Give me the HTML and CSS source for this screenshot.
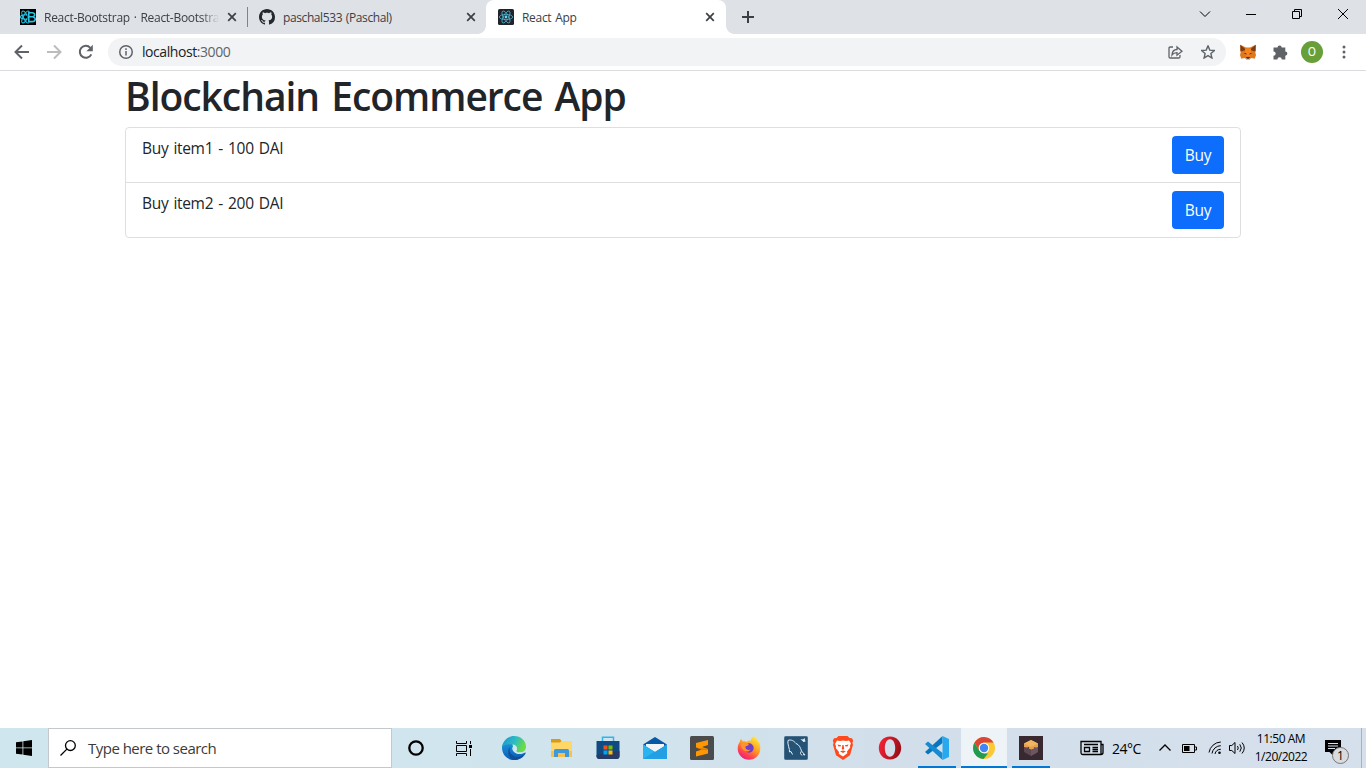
FILE: index.html
```html
<!DOCTYPE html>
<html lang="en">
<head>
<meta charset="utf-8">
<title>React App</title>
<link rel="stylesheet" href="styles.css">
</head>
<body>
<div class="screen">
  <header class="tabstrip">
    <div class="tab tab-first">
      <svg class="favicon" viewBox="0 0 16 16"><path fill="#000" d="M0 0h16v16H0z"/><g fill="none" stroke="#29c4e4" stroke-width="1.1"><ellipse cx="5.5" cy="8" rx="5" ry="2.2"/><ellipse cx="5.5" cy="8" rx="6.6" ry="2.2" transform="rotate(62 5.5 8)"/><ellipse cx="5.5" cy="8" rx="6.6" ry="2.2" transform="rotate(118 5.5 8)"/></g><path fill="#000" d="M7.5 3H16v10.500H7.500z"/><path fill="none" stroke="#29c4e4" stroke-width="1.6" d="M8.800 3.800h3.300c3.500 0 3.300 4 0 4 4.300 0 4 4.800 0 4.800H8.800zM8.800 7.800h3.500"/></svg>
      <span class="tab-title fade">React-Bootstrap · React-Bootstrap</span>
      <svg class="tab-close" viewBox="0 0 10 10"><path d="M1.200 1.200l7.600 7.600M8.800 1.200L1.200 8.800"/></svg>
    </div>
    <div class="tab tab-second">
      <svg class="favicon" viewBox="0 0 16 16"><path fill="#24292f" d="M8 0C3.580 0 0 3.580 0 8c0 3.540 2.290 6.530 5.470 7.590.4.070.55-.17.55-.38 0-.19-.01-.82-.01-1.490-2.010.37-2.530-.49-2.690-.94-.09-.23-.48-.94-.82-1.130-.28-.15-.68-.52-.01-.53.63-.01 1.080.58 1.230.82.72 1.210 1.870.87 2.330.66.07-.52.28-.87.51-1.070-1.780-.2-3.640-.89-3.640-3.950 0-.87.31-1.590.82-2.150-.08-.2-.36-1.020.08-2.120 0 0 .67-.21 2.200.82.64-.18 1.320-.27 2-.27s1.360.09 2 .27c1.530-1.040 2.200-.82 2.200-.82.44 1.100.16 1.920.08 2.120.51.56.82 1.270.82 2.150 0 3.070-1.870 3.750-3.650 3.950.29.25.54.73.54 1.480 0 1.070-.01 1.930-.01 2.200 0 .21.15.46.55.38A8 8 0 0 0 16 8c0-4.420-3.580-8-8-8z"/></svg>
      <span class="tab-title">paschal533 (Paschal)</span>
      <svg class="tab-close" viewBox="0 0 10 10"><path d="M1.200 1.200l7.600 7.600M8.800 1.200L1.200 8.800"/></svg>
    </div>
    <div class="tab tab-active">
      <svg class="favicon" viewBox="0 0 16 16"><rect width="16" height="16" rx="1.500" fill="#20232a"/><g fill="none" stroke="#4fb3cd" stroke-width=".8"><ellipse cx="8" cy="8" rx="6.700" ry="2.600"/><ellipse cx="8" cy="8" rx="6.700" ry="2.600" transform="rotate(60 8 8)"/><ellipse cx="8" cy="8" rx="6.700" ry="2.600" transform="rotate(120 8 8)"/></g><circle cx="8" cy="8" r="1.400" fill="#61dafb"/></svg>
      <span class="tab-title tt-app">React App</span>
      <svg class="tab-close" viewBox="0 0 10 10"><path d="M1.200 1.200l7.600 7.600M8.800 1.200L1.200 8.800"/></svg>
    </div>
    <svg class="new-tab" viewBox="0 0 12 12"><path d="M6 0v12M0 6h12"/></svg>
    <div class="window-controls">
      <svg viewBox="0 0 12 12"><path d="M1 3.500l5 5 5-5"/></svg>
      <svg viewBox="0 0 12 12"><path d="M1 6.500h10"/></svg>
      <svg viewBox="0 0 12 12"><path d="M1.500 3.500h7v7h-7zM3.500 3.500v-2h7v7h-2"/></svg>
      <svg viewBox="0 0 12 12"><path d="M1 1l10 10M11 1L1 11"/></svg>
    </div>
  </header>

  <nav class="toolbar">
    <svg class="nav-icon" viewBox="0 0 16 16"><path d="M15 8H2M8 1.500L1.500 8 8 14.500"/></svg>
    <svg class="nav-icon disabled" viewBox="0 0 16 16"><path d="M1 8h13M8 1.500L14.500 8 8 14.500"/></svg>
    <svg class="nav-icon" viewBox="0 0 16 16"><path d="M13.300 10.300A6 6 0 1 1 12.300 3.800"/><path class="solid" d="M14.800.8v6.400H8.400z"/></svg>
    <div class="omnibox">
      <svg class="info" viewBox="0 0 14 14"><circle cx="7" cy="7" r="6.250"/><path d="M7 6v4.500M7 3.300v1.600"/></svg>
      <span class="address">localhost<span class="port">:3000</span></span>
      <svg class="share" viewBox="0 0 15 14"><path d="M5 2H2.300Q1 2 1 3.300v8.400Q1 13 2.300 13h8.400q1.300 0 1.300-1.300V10"/><path d="M4 10c.2-3.700 2-5.500 5-5.500V2l5 4.200-5 4V7.600c-2.300 0-3.800.7-5 2.400z"/></svg>
      <svg class="star" viewBox="0 0 14 14"><path d="M7 .9l1.800 4.200 4.600.4-3.500 3 1 4.500L7 10.600 3.100 13l1-4.500-3.500-3 4.600-.4z"/></svg>
    </div>
    <svg class="ext" viewBox="0 0 16 16"><path fill="#e2761b" d="M.3.700L6 3.500h4l5.700-2.800v6l-.5 1 .8 3.500-1.300 3.500-3-.7-2.500 1.800H6.800L4.300 14l-3 .7L0 11.200l.8-3.500-.5-1z"/><path fill="#763d16" d="M.3.700l5 4.200-.8 1.500-4 1zM15.700.700l-5 4.200.8 1.500 4 1z"/><path fill="#f5841f" d="M5.300 4.400h5.400l.5 5.500-1.700 2.500h-3l-1.700-2.500z"/><path fill="#233447" d="M3.800 9.100l2.500.2v1.400zM12.200 9.100l-2.500.2v1.400zM6.500 13h3l.5 1.500H6z"/><path fill="#d7c1b3" d="M4.800 14l1.500.1.700 1.200h2l.700-1.200 1.500-.1-2.100 2H7z"/></svg>
    <svg class="ext" viewBox="0 0 16 16"><path fill="#5f6368" d="M1.500 3.500h4a2.100 2.100 0 1 1 4.200 0H13.300v4a2.100 2.100 0 1 1 0 4.200V15.500H9.800a2.200 2.200 0 0 0-4.400 0H1.500v-3.700a2.200 2.200 0 0 0 0-4.400z"/></svg>
    <span class="avatar">O</span>
    <svg class="kebab" viewBox="0 0 4 14"><circle cx="2" cy="2" r="1.500"/><circle cx="2" cy="7" r="1.500"/><circle cx="2" cy="12" r="1.500"/></svg>
  </nav>

  <main class="page">
    <div class="container">
      <h1 class="heading">Blockchain Ecommerce App</h1>
      <ul class="list-group">
        <li class="list-item"><span class="item-label">Buy item1 - 100 DAI</span><button class="btn">Buy</button></li>
        <li class="list-item"><span class="item-label">Buy item2 - 200 DAI</span><button class="btn">Buy</button></li>
      </ul>
    </div>
  </main>

  <footer class="taskbar">
    <div class="start"><svg class="win" viewBox="0 0 16 16"><path d="M0 2.300l6.500-.9v6.100H0zM7.300 1.300L16 0v7.500H7.300zM0 8.300h6.500v6.200L0 13.700zM7.300 8.300H16V16l-8.700-1.300z"/></svg></div>
    <div class="search"><svg class="lens" viewBox="0 0 16 16"><circle cx="10.400" cy="5.600" r="4.900"/><path d="M6.900 9.100L.5 15.500"/></svg><span class="search-text">Type here to search</span></div>
    <div class="system-buttons">
      <svg class="cortana" viewBox="0 0 16 16"><circle cx="8" cy="8" r="6.700"/></svg>
      <svg class="taskview" viewBox="0 0 16 16"><path d="M.5 1v2.500h10V1M.5 5.500h10v6H.5zM.5 16v-2.500h10V16M14.500 1v3M14.500 9v7"/><path class="solid" d="M13 5h3v3h-3z"/></svg>
    </div>
    <div class="apps">
      <div class="app"><svg viewBox="0 0 24 24"><defs><linearGradient id="e1" x2="1" y2=".4"><stop stop-color="#1991d0"/><stop offset=".55" stop-color="#2bbbc4"/><stop offset="1" stop-color="#6adc45"/></linearGradient><linearGradient id="e2" x2="0" y2="1"><stop stop-color="#1d9be0"/><stop offset="1" stop-color="#0a5cb4"/></linearGradient></defs><path fill="url(#e2)" d="M0 11.500C.5 5 6 3 10 6l1 5c-1 4 3 7.500 8 7 1.800-.2 3-.8 4-1.400.6-.4 1 .2.600.800C21.500 21.500 17 24 12 24 5 24 0 18.500 0 11.500z"/><path fill="url(#e1)" d="M0 11.500C.7 4.500 6 0 12 0c7 0 12 5 12 10.500 0 4-3 6-6 6-2.600 0-4.400-1-3.500-2.200 1.200-1.600.6-5.300-3.500-5.800C6 8 2 8 0 11.500z"/><path fill="#124f9b" d="M9 10c-3 3-1 9 4 10.500 3.500 1 7-.2 9.500-2.700C20.500 22 16.500 24 12.500 24 7 23.500 3.500 14 9 10z"/><path fill="#d2e6ee" d="M10.300 12c.3-2 3.300-2.500 4.300-.5.600 1.200.4 2-.2 2.900-.8 1.300 1 2.100 3.600 2.100 1 0 2-.3 3-.8-1 2.300-4.500 2.600-6.500 1.800-2.500-1-4.500-3-4.200-5.500z"/></svg></div>
      <div class="app"><svg viewBox="0 0 24 24"><path fill="#d99a15" d="M2 3h9l1.500 2H22v5H2z"/><path fill="#ffd768" d="M2 6.500h9L12.500 5H23v16H2z"/><path fill="#f5c34b" d="M2 15h21v6H2z"/><path fill="#3e98db" d="M5 21v-6.500q0-1.500 1.500-1.500h12q1.500 0 1.500 1.500V21h-4v-4H9v4z"/></svg></div>
      <div class="app"><svg viewBox="0 0 24 24"><path fill="none" stroke="#30b4ed" stroke-width="1.500" d="M6.500 6V1.300h11V6"/><path fill="#104a82" d="M.5 5h23v15q0 3-3 3h-17q-3 0-3-3z"/><path fill="#273a68" d="M.5 19l23-4v5q0 3-3 3h-17q-3 0-3-3z"/><path fill="#f25022" d="M7.500 9.500h4v4h-4z"/><path fill="#7fba00" d="M12.500 9.500h4v4h-4z"/><path fill="#00a4ef" d="M7.500 14.500h4v4h-4z"/><path fill="#ffb900" d="M12.500 14.500h4v4h-4z"/></svg></div>
      <div class="app"><svg viewBox="0 0 24 24"><path fill="#0759a5" d="M0 8.500L12 1l12 7.500L12 15z"/><path fill="#f2f5f8" d="M3 8h18v8H3z"/><path fill="#1385d5" d="M0 8.500L12 16l12-7.500V23H0z"/><path fill="#29b3ef" d="M0 8.500L12 16 1 23H0z"/><path fill="#249fe4" d="M24 8.500L12 16 0 23h24z"/></svg></div>
      <div class="app"><svg viewBox="0 0 24 24"><rect width="24" height="24" rx="1.500" fill="#4b4b4b"/><path fill="#ff9800" d="M18 4v5l-6 2 6 2v4.500L6 20.500v-5l6-2-6-2V7z"/><path fill="#d97c0a" d="M6 11.500l12 1.500v1L12 14z"/></svg></div>
      <div class="app"><svg viewBox="0 0 24 24"><defs><linearGradient id="f1" x1=".8" x2=".2" y2="1"><stop stop-color="#fff044"/><stop offset=".45" stop-color="#ff9b20"/><stop offset=".75" stop-color="#ff4251"/><stop offset="1" stop-color="#e3168c"/></linearGradient></defs><path fill="url(#f1)" d="M16.500 0c3.300 2 4 3.700 4.500 5 1.500 1.300 2.500 4.500 2.300 7.500A11.300 11.300 0 0 1 .7 12.500C.7 9 2 6.800 3 5.500L3.500 3c1 .4 2 1.500 2.400 2.500 1-.5 2.700-.3 4 .2C11 5 12 4 13.800 4.700 14 2.800 15 1 16.500 0z"/><circle cx="12" cy="12" r="4.700" fill="#703ec9"/><path fill="#ff932e" d="M4 8c3-2 6-2 8 1l-3.500 1.500c-.5 3 2.500 4 5 3-1 2-4 3-6.500 1C5 13 4 11 4 8z"/></svg></div>
      <div class="app"><svg viewBox="0 0 24 24"><rect x=".5" y=".5" width="23" height="23" rx="1" fill="#245376" stroke="#476f8c"/><path fill="none" stroke="#e5eef4" stroke-width="1" d="M8.500 18.500L7 15.500l-1.500.5C6 13 3 7.500 4 4.500c3-1.500 6 .5 8 3 3 1 4.500 4 5.500 7.500l3.500 4-2-.5M17 15.500l-.5 2 1.500 2"/><path fill="#e5eef4" d="M16.500 3l2.500.5L20.500 2l1 3.500-2 .5z"/></svg></div>
      <div class="app"><svg viewBox="0 0 24 24"><path fill="#ff4a1c" d="M7.500 0h9l2 2 2.500.2 1.200 2.500-.8 2 .6 2-3 10.500L12 24l-7-4.800L2 8.700l.6-2-.8-2L3 2.200 5.500 2z"/><path fill="#fff" d="M6 4.500l3 .6 3-.6 3 .6 3-.6 2 3-1 2 .2 2-3.200 4 .3 1.700L12 20.500l-4.300-2.800L8 16l-3.200-4 .2-2-1-2z"/><path fill="#fb4a20" d="M6.500 8.500l3.500.8v1L7.500 10.500zM17.500 8.500l-3.500.8v1l2.500.2zM11.400 9h1.200l.6 4-1.200.8-1.200-.8zM9 15.300l3-.8 3 .8-3 1.600z"/></svg></div>
      <div class="app"><svg viewBox="0 0 24 24"><defs><linearGradient id="o1" x2="1" y2=".3"><stop stop-color="#ff2438"/><stop offset="1" stop-color="#9d1018"/></linearGradient></defs><path fill="url(#o1)" fill-rule="evenodd" d="M12 .5C5 .5.800 6 .800 12S5 23.500 12 23.500 23.200 18 23.200 12 19 .500 12 .500zM12 3.200c3.200 0 5.200 4 5.200 8.800s-2 8.800-5.200 8.800S6.800 16.800 6.800 12 8.800 3.200 12 3.200z"/></svg></div>
      <div class="app running"><svg viewBox="0 0 24 24"><path fill="#0876bd" d="M17.500 0v7L3 18.500 0 16z"/><path fill="#168bd2" d="M0 8l3-2.500L17.500 17v7z"/><path fill="#29a9ed" d="M17.500 0L24 3v18l-6.500 3z"/></svg></div>
      <div class="app active"><svg viewBox="0 0 24 24"><circle cx="12" cy="12" r="11" fill="#fbc934"/><path fill="#209b51" d="M2.500 6.500L7.300 14.700 12 17.400h4L11.500 23A11 11 0 0 1 2.500 6.500z"/><path fill="#dc4638" d="M2.500 6.500A11 11 0 0 1 21.500 6.600H12a5.400 5.400 0 0 0-4.700 8.100z"/><circle cx="12" cy="12" r="5.200" fill="#fff"/><circle cx="12" cy="12" r="4.200" fill="#4285f4"/></svg></div>
      <div class="app running"><svg viewBox="0 0 24 24"><path fill="#38282f" d="M0 0h24v24H0z"/><path fill="#5d4751" d="M5 9l7 4 7-4v7l-7 4-7-4z"/><path fill="#6b5560" d="M12 13l7-4v7l-7 4z"/><path fill="#e5a14f" d="M12 4L19 7.500V11l-2 .5-2-.5v1.500l-3 1-2-1V11l-2 .5-3-.5V7.500z"/><path fill="#f1b65f" d="M12 4l7 3.500-7 3.300-7-3.300z"/></svg></div>
    </div>
    <div class="tray">
      <svg class="news" viewBox="0 0 24 16"><path d="M1 1.500h20v13H3q-2 0-2-2zM21 4.500h2v8q0 2-2 2M4 4.500h14M12.500 7.500H18M12.500 9.500H18M12.500 11.500H18"/><path d="M4.500 7.500h5v4h-5z"/></svg>
      <span class="temp">24°C</span>
      <svg class="chev" viewBox="0 0 12 8"><path d="M.5 6.500L6 1l5.500 5.500"/></svg>
      <svg class="battery" viewBox="0 0 15 9"><path d="M.5.500h12v8H.500zM12.500 3h2v3h-2"/><path class="solid" d="M2 2h5.500v5H2z"/></svg>
      <svg class="wifi" viewBox="0 0 14 14"><path d="M1 11.500A12.500 12.500 0 0 1 12.800 1M4 12.500a9 9 0 0 1 8.800-7.800M7 13a5.500 5.500 0 0 1 5.800-4.700"/><circle class="solid" cx="11.500" cy="11.800" r="1.300"/></svg>
      <svg class="sound" viewBox="0 0 17 14"><path d="M.5 4.500h2.300L6 1.500v11l-3.200-3H.500zM8.500 5q1.500 2 0 4M10.800 3.300q3 3.700 0 7.400M13 1.500q4.500 5.500 0 11"/></svg>
      <div class="clock"><span class="time">11:50 AM</span><span class="date">1/20/2022</span></div>
      <div class="notify"><svg viewBox="0 0 16 16"><path d="M0 0h16v12H8.500v4l-4-4H0z"/><path class="lines" d="M3 3.500h10M3 6h10M3 8.500h7"/></svg><span class="badge">1</span></div>
      <div class="show-desktop"></div>
    </div>
  </footer>
</div>
</body>
</html>
```
FILE: styles.css
```css
* { box-sizing: border-box; }
body { margin: 0; font-family: "Open Sans", "Noto Sans", sans-serif; overflow: hidden; }
svg { display: block; flex: none; fill: none; stroke: currentColor; }
svg [fill] { stroke: none; }
svg [stroke] { stroke: revert-layer; }
.solid { fill: currentColor; stroke: none; }
.screen { width: 1366px; height: 768px; display: flex; flex-direction: column; background: #fff; }

.tabstrip { height: 34px; flex: none; display: flex; align-items: center; padding-left: 8px; background: #dee1e6; color: #3c4043; }
.tab { height: 34px; display: flex; align-items: center; padding: 0 11px 0 12px; }
.tab-first { width: 240px; padding-right: 11px; background: linear-gradient(#808388, #808388) right center / 1px 20px no-repeat; }
.tab-second { width: 238px; padding-left: 11px; padding-right: 10px; }
.tab-active { position: relative; width: 240px; background: #fff; border-radius: 8px 8px 0 0; }
.tab-active::before, .tab-active::after { content: ""; position: absolute; bottom: 0; width: 8px; height: 8px; }
.tab-active::before { left: -8px; background: radial-gradient(circle at 0 0, #dee1e6 7.5px, #fff 8px); }
.tab-active::after { right: -8px; background: radial-gradient(circle at 100% 0, #dee1e6 7.5px, #fff 8px); }
.favicon { width: 16px; height: 16px; stroke: none; }
.tab-title { flex: 1; margin: 1px 9px 0 8px; overflow: hidden; white-space: nowrap; font-size: 12px; line-height: 20px; letter-spacing: -.4px; word-spacing: 1px; }
.tt-app { letter-spacing: -.3px; }
.fade { letter-spacing: -.28px; -webkit-mask-image: linear-gradient(90deg, #000 90%, transparent); mask-image: linear-gradient(90deg, #000 90%, transparent); margin-right: 8px; }
.tab-close { width: 10px; height: 10px; stroke-width: 1.7; }
.new-tab { width: 12px; height: 12px; margin-left: 16px; stroke-width: 2; }
.window-controls { margin: -6px 17px 0 auto; display: flex; gap: 34px; color: #000; }
.window-controls svg { width: 12px; height: 12px; }

.toolbar { height: 37px; flex: none; display: flex; align-items: center; padding: 0 20px 0 14px; border-bottom: 1px solid #dadce0; color: #5f6368; }
.nav-icon { width: 16px; height: 16px; margin-right: 16px; stroke-width: 2; }
.nav-icon:nth-child(3) { margin-right: 14px; }
.disabled { color: #babcbe; }
.omnibox { width: 1118px; height: 28px; display: flex; align-items: center; padding: 0 11px; border-radius: 14px; background: #f1f3f4; }
.info { width: 14px; height: 14px; stroke-width: 1.5; }
.address { margin-left: 9px; font-size: 14px; line-height: 20px; letter-spacing: -.43px; color: #202124; }
.port { color: #5f6368; }
.share { width: 15px; height: 14px; margin-left: auto; stroke-width: 1.3; }
.star { width: 14px; height: 14px; margin-left: 18px; stroke-width: 1.4; }
.ext { width: 16px; height: 16px; margin-left: 14px; stroke: none; }
.ext + .ext { margin-left: 16px; }
.avatar { width: 22px; height: 22px; margin-left: 13px; border-radius: 50%; background: #689f38; color: #fff; text-align: center; font: 12px/22px Roboto, sans-serif; }
.kebab { width: 4px; height: 14px; margin-left: 19px; fill: currentColor; stroke: none; }

.page { flex: 1; min-height: 0; color: #212529; }
.container { width: 1140px; margin: 0 auto; padding: 0 12px; }
.heading { margin: 0 0 8px; font-size: 39px; line-height: 48px; font-weight: 570; letter-spacing: -1.05px; word-spacing: 3.2px; white-space: nowrap; padding-top: 1px; height: 48px; }
.list-group { margin: 0; padding: 0; list-style: none; border: 1px solid #dfdfdf; border-radius: 4px; }
.list-item { display: flex; justify-content: space-between; align-items: flex-start; padding: 8px 16px; }
.list-item + .list-item { border-top: 1px solid #dfdfdf; }
.item-label { font-size: 15.5px; line-height: 24px; letter-spacing: -.32px; word-spacing: 1.4px; }
.btn { width: 52px; height: 38px; padding: 0; border: 0; border-radius: 4px; background: #0d6efd; color: #fff; font: 15.5px/24px "Open Sans", sans-serif; letter-spacing: -.3px; }

.taskbar { height: 40px; flex: none; display: flex; background: linear-gradient(90deg, #cfe6ee, #d1e4ed 45%, #d2dfea 65%, #d5e0ec); color: #000; }
.start { width: 48px; display: grid; place-items: center; }
.win { width: 16px; height: 16px; fill: #000; stroke: none; }
.search { width: 344px; display: flex; align-items: center; padding-left: 11px; border: 1px solid #c5c8ca; background: #fff; }
.lens { width: 16px; height: 16px; stroke-width: 1.3; }
.search-text { margin-left: 12px; font-size: 15px; letter-spacing: -.52px; color: #3b3b3b; }
.system-buttons { width: 99px; display: flex; align-items: center; gap: 32px; padding-left: 16px; }
.cortana, .taskview { width: 16px; height: 16px; }
.cortana { stroke-width: 2.3; }
.apps { display: flex; gap: 1px; }
.app { width: 46px; height: 40px; display: grid; place-items: center; }
.app svg { width: 24px; height: 24px; stroke: none; }
.running { background: linear-gradient(#0078d7, #0078d7) center bottom / 38px 2px no-repeat; }
.active { background: linear-gradient(#0078d7, #0078d7) center bottom / 46px 2px no-repeat #edf3f7; }
.tray { flex: 1; display: flex; align-items: center; padding-left: 26px; }
.news { width: 24px; height: 16px; stroke-width: 1.3; }
.temp { width: 30px; margin: 1px 0 0 8px; font-size: 14px; letter-spacing: -.5px; white-space: nowrap; }
.chev { width: 12px; height: 8px; margin-left: 17px; stroke-width: 1.3; }
.battery { width: 15px; height: 9px; margin-left: 11px; }
.wifi { width: 14px; height: 14px; margin-left: 11px; }
.sound { width: 17px; height: 14px; margin-left: 7px; }
.clock { width: 62px; margin-left: 4px; display: flex; flex-direction: column; align-items: center; font-size: 12px; line-height: 18px; letter-spacing: -.48px; white-space: nowrap; }
.notify { position: relative; width: 24px; height: 24px; margin: 7px 0 0 13px; }
.notify svg { width: 16px; height: 16px; fill: #000; stroke: none; }
.notify .lines { stroke: #d5e0ee; stroke-width: 1; }
.badge { position: absolute; left: 7px; top: 7px; width: 17px; height: 17px; border: 1px solid #777; border-radius: 50%; background: #d9dcde; text-align: center; font-size: 12px; line-height: 15px; }
.show-desktop { width: 5px; height: 40px; margin-left: auto; border-left: 1px solid #a9b3bd; }
```
